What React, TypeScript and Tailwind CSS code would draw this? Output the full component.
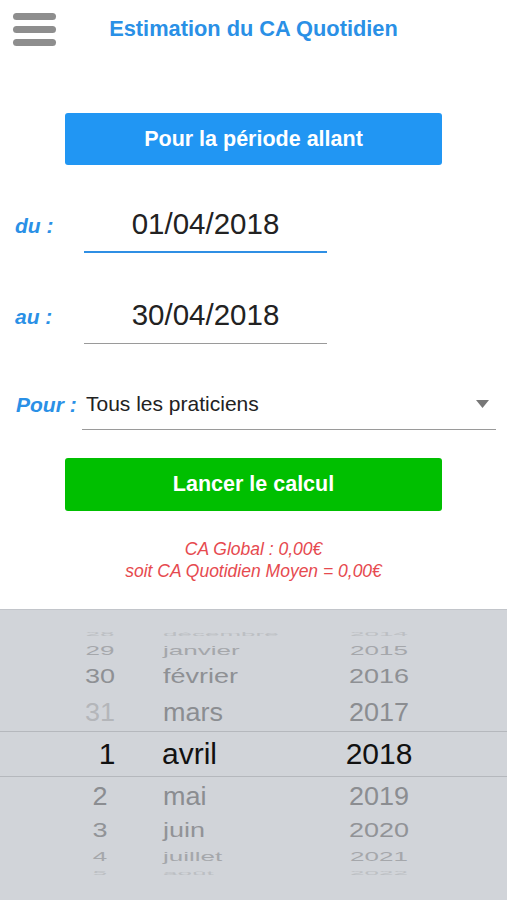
import React from 'react'

type Row = {
  day: string
  month: string
  year: string
  h: string
  scale: number
  color: string
  dayColor?: string
  size: string
}

const ABOVE: Row[] = [
  { day: '28', month: 'décembre', year: '2014', h: 'h-[14px]', scale: 0.2, color: 'text-[#bcbfc3]', size: 'text-[26px]' },
  { day: '29', month: 'janvier', year: '2015', h: 'h-[17px]', scale: 0.5, color: 'text-[#a5a7ab]', size: 'text-[26px]' },
  { day: '30', month: 'février', year: '2016', h: 'h-[36px]', scale: 0.78, color: 'text-[#8e9094]', size: 'text-[27px]' },
  { day: '31', month: 'mars', year: '2017', h: 'h-[37px]', scale: 0.95, color: 'text-[#8b8d91]', dayColor: 'text-[#b4b6ba]', size: 'text-[27px]' },
]

const BELOW: Row[] = [
  { day: '2', month: 'mai', year: '2019', h: 'h-[38px]', scale: 0.95, color: 'text-[#8b8d91]', size: 'text-[27px]' },
  { day: '3', month: 'juin', year: '2020', h: 'h-[31px]', scale: 0.78, color: 'text-[#919397]', size: 'text-[27px]' },
  { day: '4', month: 'juillet', year: '2021', h: 'h-[20px]', scale: 0.52, color: 'text-[#a5a7ab]', size: 'text-[26px]' },
  { day: '5', month: 'août', year: '2022', h: 'h-[13px]', scale: 0.2, color: 'text-[#bcbfc3]', size: 'text-[26px]' },
]

function PickerRow({ row }: { row: Row }) {
  return (
    <div className={`flex items-center overflow-hidden ${row.h} ${row.size} ${row.color} leading-none`}>
      <div className="flex items-center w-full" style={{ transform: `scaleY(${row.scale})` }}>
        <span className={`ml-[70px] w-[60px] text-center ${row.dayColor ?? ''}`}>{row.day}</span>
        <span className="ml-[33px] w-[150px]">{row.month}</span>
        <span className="ml-[16px] w-[100px] text-center">{row.year}</span>
      </div>
    </div>
  )
}

function DateRow({ label, value, active }: { label: string; value: string; active?: boolean }) {
  return (
    <div className="flex items-center pl-[15px]">
      <span className="w-[69px] mb-[8px] text-[21px] font-bold italic text-[#2a90e6]">{label}</span>
      <div
        className={`w-[243px] h-[46px] pb-[10px] flex items-center justify-center text-[29.5px] text-[#222] ${
          active ? 'border-b-2 border-[#2f8fe4]' : 'border-b border-[#9a9a9a]'
        }`}
      >
        {value}
      </div>
    </div>
  )
}

export default function App() {
  return (
    <div className="h-[900px] flex flex-col bg-white font-['Liberation_Sans',Arial,sans-serif] overflow-hidden">
      {/* Header */}
      <div className="h-[58px] grid grid-cols-[1fr_auto_1fr] items-center">
        <div className="pl-[13px] flex flex-col gap-[6px]">
          <div className="w-[43px] h-[7px] rounded-full bg-[#8e8e8e]" />
          <div className="w-[43px] h-[7px] rounded-full bg-[#8e8e8e]" />
          <div className="w-[43px] h-[7px] rounded-full bg-[#8e8e8e]" />
        </div>
        <h1 className="text-[21.8px] font-bold text-[#2a90e6]">Estimation du CA Quotidien</h1>
        <div />
      </div>

      <div className="mt-[55px] mx-[65px] h-[52px] rounded-[3px] bg-[#2196f3] flex items-center justify-center text-white text-[21.5px] font-bold">
        Pour la période allant
      </div>

      <div className="mt-[42px]">
        <DateRow label="du :" value="01/04/2018" active />
      </div>
      <div className="mt-[45px]">
        <DateRow label="au :" value="30/04/2018" />
      </div>

      <div className="mt-[37px] flex items-center pl-[16px] pr-[11px]">
        <span className="w-[66px] mb-[2px] text-[21px] font-bold italic text-[#2a90e6]">Pour :</span>
        <div className="flex-1 h-[49px] pb-[2px] pl-[4px] pr-[7px] flex items-center justify-between border-b border-[#9a9a9a]">
          <span className="text-[21px] text-[#222]">Tous les praticiens</span>
          <svg width="13" height="8" viewBox="0 0 13 8">
            <path d="M0 0 H13 L6.5 8 Z" fill="#777" />
          </svg>
        </div>
      </div>

      <div className="mt-[28px] mx-[65px] h-[53px] rounded-[3px] bg-[#00bf00] flex items-center justify-center text-white text-[21.5px] font-bold">
        Lancer le calcul
      </div>

      <div className="mt-[27px] text-center italic text-[17.5px] leading-[22px] text-[#e64a4f]">
        <p>CA Global : 0,00€</p>
        <p>soit CA Quotidien Moyen = 0,00€</p>
      </div>

      {/* Date picker wheel */}
      <div className="mt-auto h-[291px] bg-[#d1d4d9] border-t border-[#c2c5ca] pt-[17px]">
        {ABOVE.map(r => (
          <PickerRow key={r.year} row={r} />
        ))}
        <div className="h-[46px] border-y border-[#b5b8bd] flex items-center text-[30px] text-[#111] leading-none">
          <span className="ml-[77px] w-[60px] text-center">1</span>
          <span className="ml-[25px] w-[150px]">avril</span>
          <span className="ml-[17px] w-[100px] text-center">2018</span>
        </div>
        {BELOW.map(r => (
          <PickerRow key={r.year} row={r} />
        ))}
      </div>
    </div>
  )
}
